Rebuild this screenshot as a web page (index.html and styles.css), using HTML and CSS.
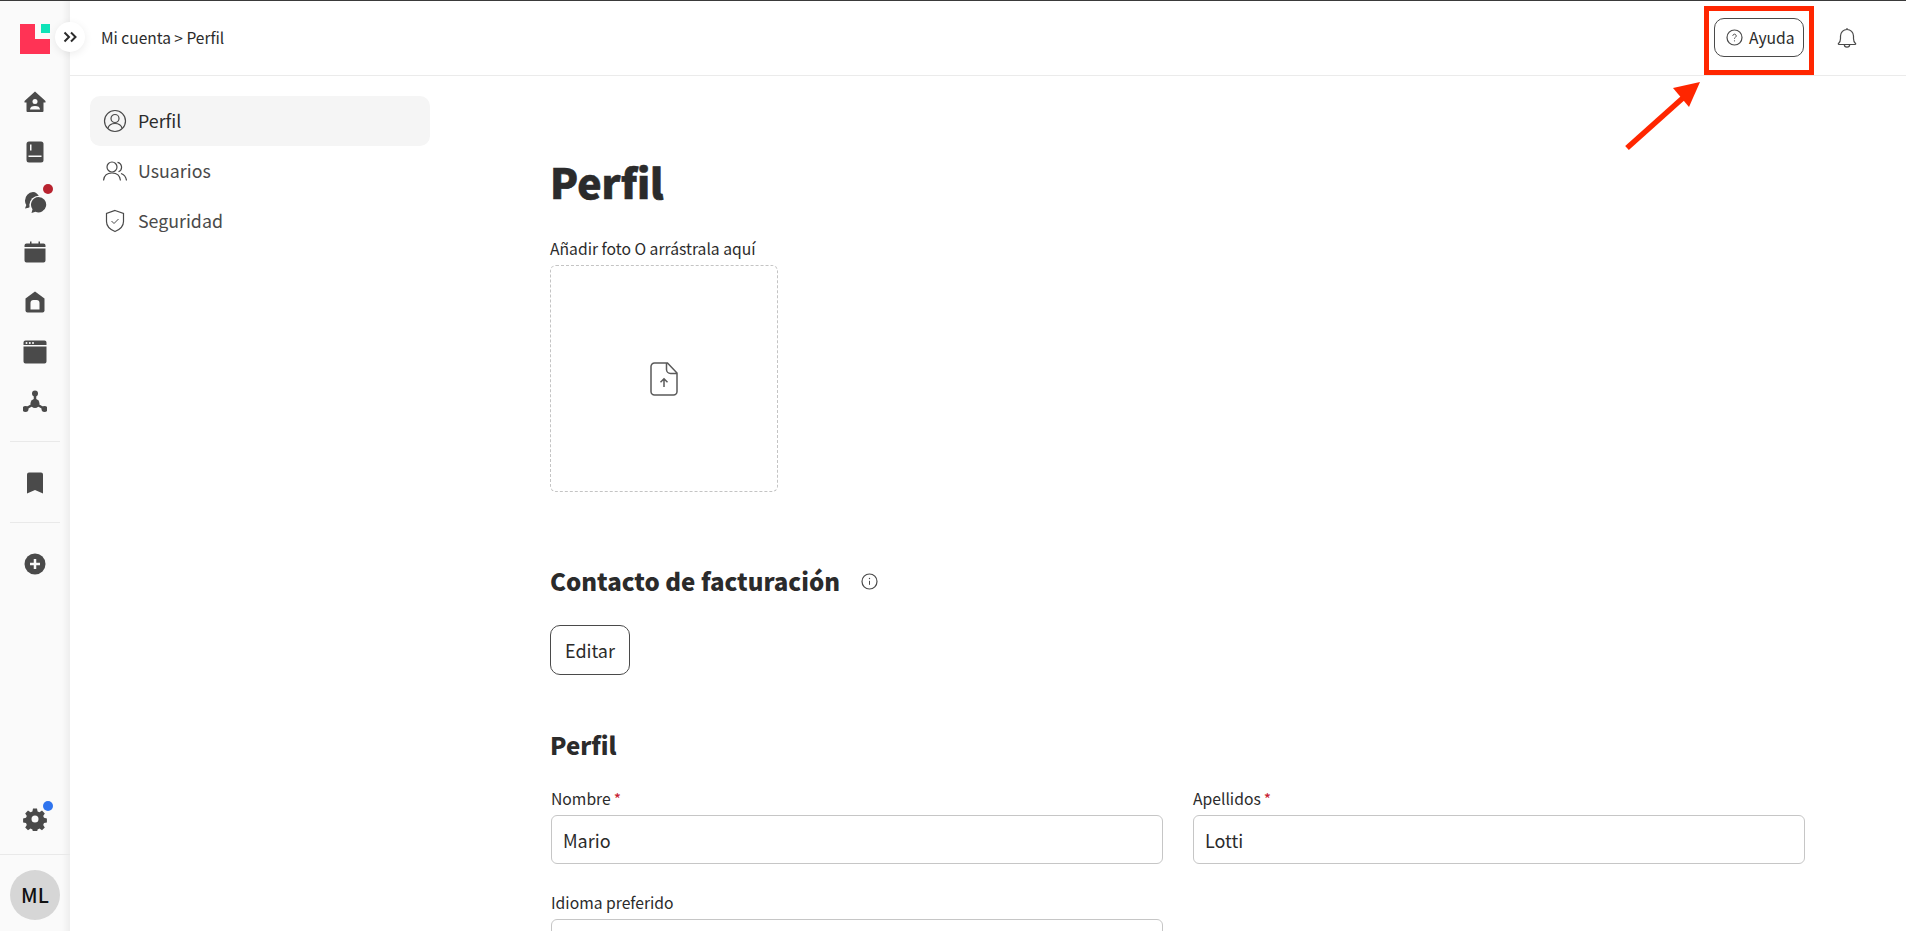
FILE: index.html
```html
<!DOCTYPE html>
<html lang="es">
<head>
<meta charset="utf-8">
<title>Perfil</title>
<link rel="stylesheet" href="styles.css">
</head>
<body>
<div class="app">
  <aside class="rail">
    <div class="rail-logo">
      <svg width="30" height="30" viewBox="0 0 30 30"><path fill="#ff3355" d="M0 0h15v15h15v15H0z"/><rect x="21" y="0" width="9" height="9" fill="#0fe3b8"/></svg>
    </div>
    <nav class="rail-group">
      <a class="rail-item"><svg width="24" height="24" viewBox="0 0 24 24"><path class="f" d="M12 1.500 1.500 11v1.600h2v8.400a1 1 0 0 0 1 1h15a1 1 0 0 0 1-1v-8.400h2V11z"/><circle class="w" cx="12" cy="11.500" r="2.500"/><path class="w" d="M7 19.500c0-2.500 2-3.500 5-3.500s5 1 5 3.500z"/></svg></a>
      <a class="rail-item"><svg width="24" height="24" viewBox="0 0 24 24"><rect class="f" x="3.500" y="1.500" width="17" height="21" rx="2.500"/><rect class="w" x="5.500" y="15.500" width="13" height="1.500"/><rect class="w" x="7" y="4.500" width="1.500" height="6"/></svg></a>
      <a class="rail-item"><svg width="24" height="24" viewBox="0 0 24 24"><path class="f" d="M10 2a8.500 8.500 0 0 0-8 8.500c0 1.700.5 3.200 1.300 4.500L2 18.500l3.500-.8 1-.5C5.800 11 9.800 7.500 16.500 7.300 15 4 12.800 2 10 2z"/><circle class="w" cx="15.500" cy="14.500" r="8.700"/><path class="f" d="M15.500 7a7.700 7.700 0 1 1-3 14.800l-4 1.200 1-3.800A7.700 7.700 0 0 1 15.500 7z"/></svg><span class="dot dot-red"></span></a>
      <a class="rail-item"><svg width="24" height="24" viewBox="0 0 24 24"><path class="f" d="M7 1.500h1.500v2h7v-2H17v2h3.500a2 2 0 0 1 2 2V7h-21V5.500a2 2 0 0 1 2-2H7zM1.500 8.500h21V20.500a2 2 0 0 1-2 2h-17a2 2 0 0 1-2-2z"/></svg></a>
      <a class="rail-item"><svg width="24" height="24" viewBox="0 0 24 24"><path class="f" d="M12 1.500 2.500 8.500V20.500a2 2 0 0 0 2 2h15a2 2 0 0 0 2-2V8.500z"/><path class="w" d="M7.500 19.500V13a3 3 0 0 1 3-3h3a3 3 0 0 1 3 3v6.500z"/></svg></a>
      <a class="rail-item"><svg width="24" height="24" viewBox="0 0 24 24"><path class="f" d="M2.500.500h19a2 2 0 0 1 2 2V5H.500V2.500a2 2 0 0 1 2-2zM.500 6.500h23v15a2 2 0 0 1-2 2h-19a2 2 0 0 1-2-2z"/><circle class="w" cx="3.500" cy="3" r="1"/><circle class="w" cx="6.800" cy="3" r="1"/><circle class="w" cx="10" cy="3" r="1"/></svg></a>
      <a class="rail-item"><svg width="24" height="24" viewBox="0 0 24 24"><circle class="f" cx="12" cy="3.500" r="3"/><circle class="f" cx="2.500" cy="19" r="3"/><circle class="f" cx="21.500" cy="19" r="3"/><circle class="f" cx="12" cy="13.500" r="4.500"/><path class="ln" d="M12 5v8M3 18.500l9-5 9 5"/></svg></a>
    </nav>
    <div class="rail-rule rail-rule-a"></div>
    <a class="rail-item rail-solo"><svg width="24" height="24" viewBox="0 0 24 24"><path class="f" d="M6 1.500h12a2 2 0 0 1 2 2v19l-8-3.500-8 3.500v-19a2 2 0 0 1 2-2z"/></svg></a>
    <div class="rail-rule rail-rule-b"></div>
    <a class="rail-item rail-solo"><svg width="24" height="24" viewBox="0 0 24 24"><circle class="f" cx="12" cy="12" r="10.500"/><path class="wl" d="M12 7v10M7 12h10"/></svg></a>
    <div class="rail-spacer"></div>
    <a class="rail-item rail-solo"><svg width="24" height="24" viewBox="0 0 24 24"><path class="f" fill-rule="evenodd" d="M10 1.500h4l.6 2.900 1.900.8 2.500-1.600 2.800 2.800-1.600 2.500.8 1.900 2.900.6v4l-2.900.6-.8 1.900 1.600 2.500-2.800 2.800-2.500-1.600-1.900.8-.6 2.900h-4l-.6-2.900-1.900-.8-2.500 1.600-2.800-2.800 1.600-2.500-.8-1.900-2.900-.6v-4l2.900-.6.8-1.900L2.200 6.400 5 3.600l2.500 1.600 1.900-.8zM12 8.500a3.500 3.500 0 1 0 0 7 3.500 3.500 0 0 0 0-7z"/></svg><span class="dot dot-blue"></span></a>
    <div class="rail-foot"><span class="avatar">ML</span></div>
  </aside>

  <button class="expand" type="button" aria-label="Expandir"><svg width="14" height="12" viewBox="0 0 14 12"><path d="M1.500 1.500 6 6l-4.500 4.500M8 1.500 12.500 6 8 10.500" fill="none" stroke="#2b2b2b" stroke-width="2"/></svg></button>

  <div class="main">
    <header class="topbar">
      <div class="crumbs">Mi cuenta &gt; Perfil</div>
      <div class="top-actions">
        <button class="help" type="button"><svg width="17" height="17" viewBox="0 0 17 17"><circle cx="8.500" cy="8.500" r="7.500" class="s"/><path class="s-thin" d="M6.800 6.800a1.700 1.700 0 1 1 2.600 1.500c-.6.400-.9.700-.9 1.400"/><circle cx="8.500" cy="11.800" r=".6" fill="#4a4a4a"/></svg>Ayuda</button>
        <svg class="bell" width="20" height="22" viewBox="0 0 20 22"><path class="s" d="M1.500 16.500c1.500-1.200 2-2.500 2-5V9a6.500 6.500 0 0 1 13 0v2.500c0 2.500.5 3.800 2 5 .4.400.2 1-.4 1H1.900c-.6 0-.8-.6-.4-1zM10 1v1.500M7.300 17.500a2.700 2.700 0 0 0 5.400 0"/></svg>
      </div>
    </header>
    <div class="body">
      <nav class="subnav">
        <a class="sub-item is-active"><svg width="24" height="24" viewBox="0 0 24 24"><circle class="s" cx="12" cy="12" r="10.500"/><circle class="s" cx="12" cy="9.500" r="4"/><path class="s" d="M4.800 19.500c1-3.500 3.700-5 7.200-5s6.200 1.500 7.200 5"/></svg>Perfil</a>
        <a class="sub-item"><svg width="24" height="24" viewBox="0 0 24 24"><circle class="s" cx="9" cy="8" r="5"/><path class="s" d="M.500 21.500C1 16.500 4.500 14 9 14s8 2.500 8.500 7.500M14.500 3.300a5 5 0 0 1 1 9.500M18 14.500c3 1 5 3.500 5.500 7"/></svg>Usuarios</a>
        <a class="sub-item"><svg width="24" height="24" viewBox="0 0 24 24"><path class="s" d="M12 1.500 20.500 4.500v8c0 4.500-3.500 8-8.500 10-5-2-8.500-5.500-8.500-10v-8z"/><path class="s-thin" d="M8.500 12l2.500 2.500 4.500-4.500"/></svg>Seguridad</a>
      </nav>
      <main class="content">
        <h1 class="page-title">Perfil</h1>
        <div class="photo-label">Añadir foto O arrástrala aquí</div>
        <div class="dropzone"><svg width="28" height="34" viewBox="0 0 28 34"><path class="s-bold" d="M4.500 1h13L27 11v18.500a3.500 3.500 0 0 1-3.500 3.500h-19A3.500 3.500 0 0 1 1 29.500v-25A3.500 3.500 0 0 1 4.500 1zM16.500 1v6.500a4 4 0 0 0 4 4H27M14 25V17M10.500 20.300l3.500-3.500 3.500 3.500"/></svg></div>
        <div class="section-head billing-head">
          <h2 class="section-title">Contacto de facturación</h2>
          <svg width="17" height="17" viewBox="0 0 17 17"><circle cx="8.500" cy="8.500" r="7.500" class="s"/><path class="s-thin" d="M8.500 7.800v4"/><circle cx="8.500" cy="5.500" r=".7" fill="#4a4a4a"/></svg>
        </div>
        <button class="edit" type="button">Editar</button>
        <h2 class="section-title profile-head">Perfil</h2>
        <div class="form-grid">
          <label class="field"><span class="field-label">Nombre<span class="req">*</span></span><input class="input" value="Mario"></label>
          <label class="field"><span class="field-label">Apellidos<span class="req">*</span></span><input class="input" value="Lotti"></label>
          <label class="field"><span class="field-label">Idioma preferido</span><input class="input"></label>
        </div>
      </main>
    </div>
  </div>

  <div class="callout"></div>
  <svg class="arrow" width="90" height="84" viewBox="0 0 90 84"><path d="M3 79 60 28" stroke="#ff2600" stroke-width="5.500" fill="none"/><path d="M76 13 49 19 65 38z" fill="#ff2600"/></svg>
</div>
</body>
</html>
```

FILE: styles.css
```css
* { box-sizing: border-box; }
html, body { margin: 0; height: 100%; overflow: hidden; background: #fff; }
body { font-family: "Noto Sans CJK SC", "Noto Sans", sans-serif; color: #2b2b2b; }
.app { position: relative; display: flex; height: 931px; border-top: 1px solid #3a3a3a; overflow: hidden; }
svg { display: block; flex: none; }
.f { fill: #4a4a4a; }
.w { fill: #fafafa; }
.ln { stroke: #4a4a4a; stroke-width: 2.500; fill: none; }
.wl { stroke: #fafafa; stroke-width: 2.500; fill: none; }
.s { fill: none; stroke: #4a4a4a; stroke-width: 1.200; }
.s-thin { fill: none; stroke: #4a4a4a; stroke-width: 1; }
.s-bold { fill: none; stroke: #5a5a5a; stroke-width: 1.500; }

.rail { width: 70px; flex: none; display: flex; flex-direction: column; background: linear-gradient(90deg, #fafafa 0, #fafafa 62px, #eeeeee 70px); }
.rail-logo { height: 76px; padding: 23px 0 0 20px; }
.rail-group { display: flex; flex-direction: column; }
.rail-item { position: relative; height: 50px; display: flex; align-items: center; justify-content: center; flex: none; }
.rail-solo { flex: none; }
.rail-rule { height: 1px; margin: 0 10px; background: #e9e9e9; flex: none; }
.rail-rule-a { margin-top: 14px; margin-bottom: 16px; }
.rail-rule-b { margin-top: 14px; margin-bottom: 16px; }
.rail-spacer { flex: 1; }
.dot { position: absolute; width: 10px; height: 10px; border-radius: 50%; left: 43px; top: 7px; }
.dot-red { background: #b8232f; }
.dot-blue { background: #2f74ee; }
.rail-foot { margin-top: 10px; height: 77px; flex: none; border-top: 1px solid #e9e9e9; padding: 15px 0 0 10px; }
.avatar { width: 50px; height: 50px; border-radius: 50%; background: #d6d6d6; color: #111; font-size: 20px; font-weight: 500; line-height: 50px; text-align: center; display: block; }

.expand { position: absolute; left: 55px; top: 21px; width: 30px; height: 30px; padding: 0; border: 0; border-radius: 50%; background: #fff; box-shadow: 0 2px 8px rgba(0,0,0,.08); display: flex; align-items: center; justify-content: center; }

.main { flex: 1; min-width: 0; display: flex; flex-direction: column; }
.topbar { height: 75px; flex: none; display: flex; align-items: center; justify-content: space-between; padding: 0 49px 0 31px; border-bottom: 1px solid #ebebeb; }
.crumbs { font-size: 15.500px; line-height: 24px; color: #2b2b2b; margin-top: -2px; }
.top-actions { display: flex; align-items: center; gap: 33px; margin-top: -1px; }
.help { width: 90px; height: 39px; padding: 0 0 0 11px; border: 1px solid #4a4a4a; border-radius: 10px; background: #fff; color: #2b2b2b; font: inherit; font-size: 15.700px; line-height: 24px; display: flex; align-items: center; gap: 6px; }

.body { display: flex; flex: 1; min-height: 0; }
.subnav { width: 480px; flex: none; padding: 20px 0 0 20px; display: flex; flex-direction: column; }
.sub-item { width: 340px; height: 50px; flex: none; display: flex; align-items: center; gap: 11px; padding: 0 0 2px 13px; border-radius: 10px; font-size: 17.800px; line-height: 24px; color: #4a4a4a; }
.sub-item svg { margin-top: 2px; }
.sub-item.is-active { background: #f5f5f5; color: #2b2b2b; }

.content { flex: 1; min-width: 0; padding: 0 101px 0 0; }
.page-title { margin: 77px 0 0; font-size: 41px; font-weight: 900; line-height: 56px; color: #2b2b2b; -webkit-text-stroke: .6px #2b2b2b; }
.photo-label { margin-top: 28px; font-size: 15.700px; line-height: 24px; }
.dropzone { width: 228px; height: 227px; margin-top: 4px; border: 1px dashed #c4c4c4; border-radius: 6px; display: flex; align-items: center; justify-content: center; }
.section-head { display: flex; align-items: center; gap: 21px; }
.billing-head { margin: 71px 0 0 0; }
.section-title { margin: 0; font-size: 24px; font-weight: 900; line-height: 36px; color: #2b2b2b; }
.edit { display: block; width: 80px; height: 50px; margin-top: 26px; padding: 0; border: 1px solid #4a4a4a; border-radius: 10px; background: #fff; color: #2b2b2b; font: inherit; font-size: 18px; line-height: 24px; }
.profile-head { margin: 52px 0 0 0; }

.form-grid { display: grid; grid-template-columns: 1fr 1fr; gap: 27px 30px; margin: 24px 0 0 1px; }
.field { display: block; }
.field-label { display: block; font-size: 15.700px; line-height: 24px; color: #2b2b2b; margin-bottom: 4px; }
.req { color: #c8202f; margin-left: 3px; }
.input { display: block; width: 100%; height: 49px; padding: 0 11px; border: 1px solid #c6c6c6; border-radius: 6px; background: #fff; color: #2b2b2b; font: inherit; font-size: 18px; outline: 0; }

.callout { position: absolute; left: 1704px; top: 5px; width: 110px; height: 69px; border: 5px solid #ff2600; }
.arrow { position: absolute; left: 1624px; top: 68px; }
```
